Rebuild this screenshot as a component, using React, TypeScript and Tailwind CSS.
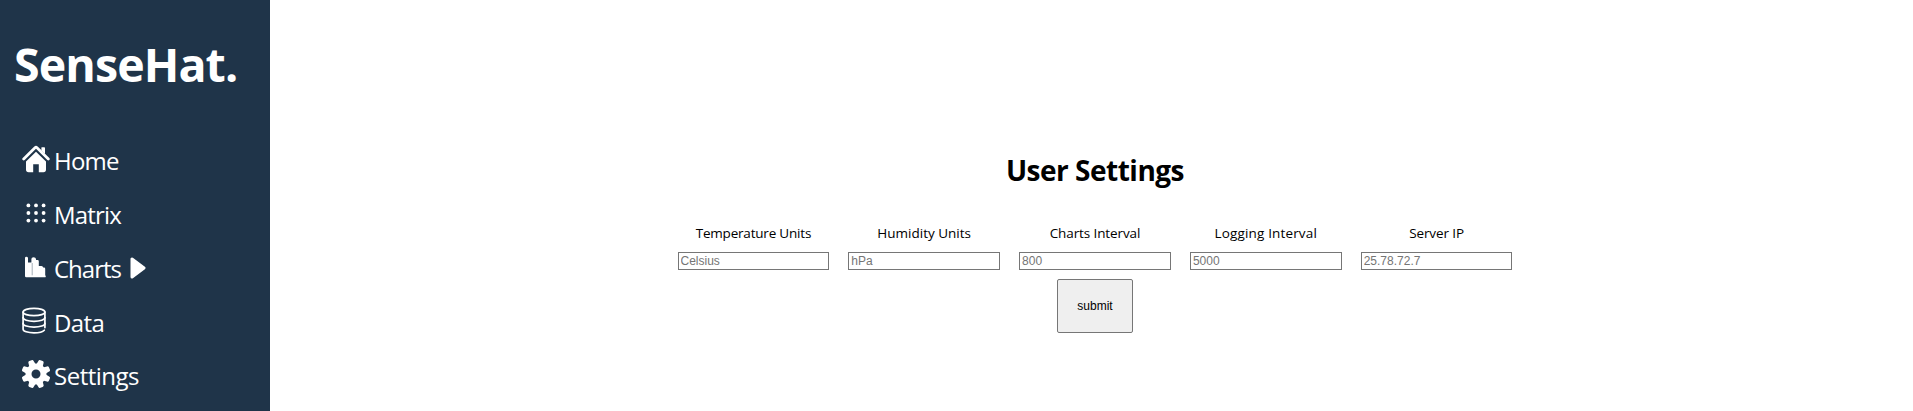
import type { ReactNode } from "react";

function HomeIcon() {
  return (
    <svg width="28" height="28" viewBox="0 0 28 28" fill="none">
      <path d="M20 2.2h2.2a.8.8 0 0 1 .8.8v6l-3.6-3.4V2.6z" fill="white" />
      <path d="M1.7 14 13 2.7q1-.9 2 0L26.3 14" stroke="white" strokeWidth="2.8" strokeLinecap="round" />
      <path d="M14 6.8 24 16.500v8.1a2.6 2.6 0 0 1-2.6 2.6h-4.6v-8h-5.6v8H6.6A2.6 2.6 0 0 1 4 24.600V16.500z" fill="white" />
    </svg>
  );
}

function MatrixIcon() {
  const steps = [6.4, 14, 21.600];
  return (
    <svg width="28" height="28" viewBox="0 0 28 28" fill="white">
      {steps.map((y) => steps.map((x) => <circle key={`${x}-${y}`} cx={x} cy={y} r="1.9" />))}
    </svg>
  );
}

function ChartIcon() {
  return (
    <svg width="28" height="28" viewBox="0 0 28 28">
      <path
        d="M3 5q0-1.200 1.400-1.200T6 5v4.500h3.400V6q0-1.800 2.200-1.800T14 6v1h1.600q1.200 0 1.200 1.200V13h2.700q1.600 0 1.600 1.600h.9q1.200 0 1.200 1.200v6.400q.6.600.6 1.200 0 .9-1.200.9H4.200Q3 24.300 3 23z"
        fill="white"
      />
      <path d="M10.200 10v12.300" stroke="#8e9aa7" strokeWidth=".8" />
    </svg>
  );
}

function DataIcon() {
  return (
    <svg width="28" height="28" viewBox="0 0 28 28" fill="none" stroke="white" strokeWidth="1.700" strokeLinecap="round">
      <ellipse cx="12" cy="5" rx="10.900" ry="3.700" />
      <path d="M1.100 5v17.200c0 2 4.800 3.700 10.900 3.700 4.800 0 8.800-1 10.300-2.700M22.900 5v15.600" />
      <path d="M1.100 10.600c0 2 4.800 3.700 10.900 3.700s10.900-1.700 10.900-3.700M1.100 16.400c0 2 4.800 3.700 10.900 3.700s10.900-1.700 10.900-3.700" />
    </svg>
  );
}

function GearIcon() {
  return (
    <svg width="28" height="28" viewBox="0 0 28 28" fill="white">
      <path
        fillRule="evenodd"
        d="M14 3.500a10.500 10.500 0 1 0 0 21 10.500 10.500 0 0 0 0-21zm0 6a4.500 4.500 0 1 1 0 9 4.500 4.500 0 0 1 0-9z"
      />
      {[22.5, 67.5, 112.5, 157.5, 202.5, 247.5, 292.5, 337.5].map((a) => (
        <path key={a} d="M10.300 7 11.200 1q.2-1.500 1.600-1.500h2.400q1.400 0 1.600 1.500l.9 6z" transform={`rotate(${a} 14 14)`} />
      ))}
    </svg>
  );
}

function NavItem({ icon, label, spacing, children }: { icon: ReactNode; label: string; spacing: string; children?: ReactNode }) {
  return (
    <li className="flex h-[53.75px] items-center">
      <span className="mb-[3px] w-8 shrink-0">{icon}</span>
      <a href="#" className={`pt-px text-[24px] leading-8 ${spacing}`}>{label}</a>
      {children}
    </li>
  );
}

const fields = [
  { label: "Temperature Units", value: "Celsius", spacing: "tracking-[-0.2px]" },
  { label: "Humidity Units", value: "hPa", spacing: "tracking-[0px]" },
  { label: "Charts Interval", value: "800", spacing: "tracking-[-0.1px]" },
  { label: "Logging Interval", value: "5000", spacing: "tracking-[0.15px]" },
  { label: "Server IP", value: "25.78.72.7", spacing: "tracking-[-0.1px]" },
];

export default function App() {
  return (
    <div className="flex h-[411px] overflow-hidden bg-white font-['Open_Sans',sans-serif] text-black">
      <aside className="w-[270px] shrink-0 bg-[#1f3449] text-white">
        <h1 className="pt-[32px] pl-[14px] text-[46.500px] leading-[64px] font-bold tracking-[-0.9px]">SenseHat.</h1>
        <ul className="mt-[38px] pl-[22px]">
          <NavItem icon={<HomeIcon />} label="Home" spacing="tracking-[-0.8px]" />
          <NavItem icon={<MatrixIcon />} label="Matrix" spacing="tracking-[-0.8px]" />
          <NavItem icon={<ChartIcon />} label="Charts" spacing="tracking-[-1px]">
            <svg className="ml-[9px]" width="16" height="22" viewBox="0 0 16 22">
              <path d="M2 2v18L14 11z" fill="white" stroke="white" strokeWidth="3" strokeLinejoin="round" />
            </svg>
          </NavItem>
          <NavItem icon={<DataIcon />} label="Data" spacing="tracking-[-0.6px]" />
          <NavItem icon={<GearIcon />} label="Settings" spacing="tracking-[-0.5px]" />
        </ul>
      </aside>
      <main className="flex flex-1 flex-col items-center pt-[150px] pl-[7px]">
        <h2 className="text-[28px] leading-10 font-bold tracking-[-0.5px]">User Settings</h2>
        <form className="mt-[33px] flex flex-col items-center">
          <div className="flex gap-[19px]">
            {fields.map((f) => (
              <label key={f.label} className="flex w-[151.800px] flex-col items-center">
                <span className={`text-[13.500px] leading-5 whitespace-nowrap ${f.spacing}`}>{f.label}</span>
                <input
                  placeholder={f.value}
                  className="mt-[9px] h-[18px] w-full border border-[#767676] px-[2px] font-['Liberation_Sans',sans-serif] text-[12px] placeholder:text-[#757575]"
                />
              </label>
            ))}
          </div>
          <button
            type="button"
            className="mt-[9px] h-[54px] w-[76px] rounded-[2px] border border-[#767676] bg-[#efefef] font-['Liberation_Sans',sans-serif] text-[12px]"
          >
            submit
          </button>
        </form>
      </main>
    </div>
  );
}
